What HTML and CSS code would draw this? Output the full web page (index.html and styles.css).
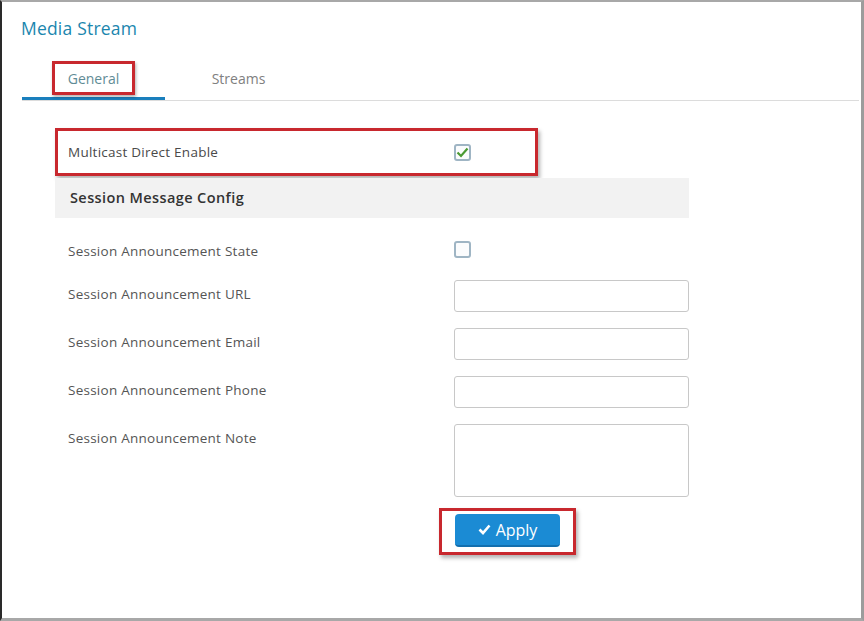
FILE: index.html
```html
<!DOCTYPE html>
<html lang="en">
<head>
    <meta charset="UTF-8">
    <title>Media Stream</title>
    <link rel="stylesheet" href="styles.css">
</head>
<body>
    <div class="frame">
        <h1 class="title">Media Stream</h1>

        <!-- tabs -->
        <div class="tabs">
            <div class="tab active"><span class="mark">General</span></div>
            <div class="tab">Streams</div>
        </div>

        <div class="form">
            <div class="row multicast mark-box">
                <label>Multicast Direct Enable</label>
                <span class="check checked">
                    <svg width="13" height="11" viewBox="0 0 13 11"><path d="M1.5 5.5 L5 9 L11.5 1.5" fill="none" stroke="#4a9a32" stroke-width="2.2"/></svg>
                </span>
            </div>

            <div class="section">Session Message Config</div>

            <div class="row state">
                <label>Session Announcement State</label>
                <span class="check"></span>
            </div>
            <div class="row">
                <label>Session Announcement URL</label>
                <input type="text">
            </div>
            <div class="row">
                <label>Session Announcement Email</label>
                <input type="text">
            </div>
            <div class="row">
                <label>Session Announcement Phone</label>
                <input type="text">
            </div>
            <div class="row">
                <label>Session Announcement Note</label>
                <textarea></textarea>
            </div>
            <div class="row actions">
                <span></span>
                <div class="apply-wrap mark-box">
                    <button class="button">
                        <svg width="13" height="11" viewBox="0 0 13 11"><path d="M1.5 5.5 L5 9 L11.5 1.5" fill="none" stroke="#fff" stroke-width="2.6"/></svg>
                        Apply
                    </button>
                </div>
            </div>
        </div>
    </div>
</body>
</html>
```

FILE: styles.css
```css
body {
    margin: 0;
    padding: 0;
    font-family: "Open Sans", "Liberation Sans", sans-serif;
    background: #fff;
}
.frame {
    width: 864px;
    height: 621px;
    box-sizing: border-box;
    border-top: 2px solid #a8a8a8;
    border-left: 2px solid #2a2a2a;
    border-right: 3px solid #9c9c9c;
    border-bottom: 3px solid #a8a8a8;
    padding-top: 14px;
    overflow: hidden;
}
.title {
    margin: 0 0 0 19px;
    font-size: 17.5px;
    line-height: 24px;
    font-weight: 500;
    color: #1b86ae;
    letter-spacing: 0.2px;
}

/* tabs */
.tabs {
    display: flex;
    height: 42px;
    margin: 18px 2px 0 20px;
    border-bottom: 1px solid #dcdcdc;
}
.tab {
    width: 147px;
    box-sizing: border-box;
    display: flex;
    justify-content: center;
    padding-top: 11px;
    font-size: 14px;
    line-height: 20px;
    color: #808080;
}
.tab.active {
    width: 143px;
    padding-top: 3px;
    border-bottom: 3px solid #1a7fbd;
    color: #5f8c96;
}
.mark {
    display: block;
    height: 34px;
    box-sizing: border-box;
    border: 3px solid #c8282e;
    padding: 5px 13px 0;
    box-shadow: 1px 2px 3px rgba(0, 0, 0, 0.3);
}
.mark-box {
    border: 3px solid #c8282e;
    box-shadow: 2px 3px 4px rgba(0, 0, 0, 0.3);
}

/* form */
.form {
    margin: 27px 0 0 53px;
    width: 634px;
}
.row {
    display: grid;
    grid-template-columns: 399px 235px;
    margin-top: 16px;
    font-size: 13.5px;
    letter-spacing: 0.25px;
    color: #555;
}
.row label {
    padding: 6px 0 0 13px;
    line-height: 17px;
}
.row input,
.row textarea {
    box-sizing: border-box;
    width: 235px;
    height: 32px;
    margin: 0;
    border: 1px solid #c8c8c8;
    border-radius: 3px;
    font: inherit;
    resize: none;
}
.row textarea {
    height: 73px;
}
.multicast {
    width: 483px;
    height: 48px;
    box-sizing: border-box;
    margin-top: 0;
    grid-template-columns: 396px 20px;
    align-items: center;
}
.multicast label {
    padding: 0 0 0 10px;
    color: #4a4a4a;
}
.section {
    margin-top: 2px;
    height: 40px;
    line-height: 40px;
    padding-left: 15px;
    background: #f2f2f2;
    font-size: 14.5px;
    font-weight: 600;
    letter-spacing: 0.4px;
    color: #333;
}
.state {
    margin-top: 19px;
    height: 27px;
}
.check {
    display: flex;
    align-items: center;
    justify-content: center;
    width: 17px;
    height: 17px;
    box-sizing: border-box;
    border: 2px solid #9fb5c4;
    border-radius: 3px;
    background: #fbfcfd;
    margin-top: 4px;
}
.multicast .check {
    margin-top: 0;
}
.actions {
    margin-top: 11px;
}
.apply-wrap {
    margin-left: -15px;
    width: 137px;
    height: 47px;
    box-sizing: border-box;
    padding: 3px 0 0 13px;
}
.button {
    display: flex;
    align-items: center;
    justify-content: center;
    gap: 5px;
    width: 105px;
    height: 33px;
    background: #1b8bd4;
    color: #fff;
    border: none;
    border-bottom: 2px solid #136fae;
    border-radius: 4px;
    font-family: inherit;
    font-size: 16px;
    cursor: pointer;
}
```
